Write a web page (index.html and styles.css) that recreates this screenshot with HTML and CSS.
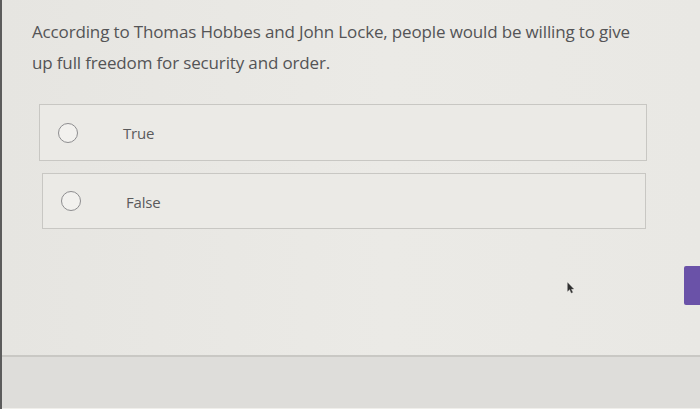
FILE: index.html
```html
<!DOCTYPE html>
<html lang="en">
<head>
<meta charset="utf-8">
<title>Question</title>
<link rel="stylesheet" href="styles.css">
</head>
<body>
<div class="page">
  <main class="content">
    <p class="question">According to Thomas Hobbes and John Locke, people would be willing to give up full freedom for security and order.</p>
    <div class="options">
      <label class="option">
        <span class="radio"></span>
        <span class="option-text">True</span>
      </label>
      <label class="option option-second">
        <span class="radio"></span>
        <span class="option-text">False</span>
      </label>
    </div>
    <div class="actions">
      <button class="next-btn" type="button" aria-label="Next"></button>
    </div>
  </main>
  <footer class="footer"></footer>
  <svg class="cursor" width="8" height="12" viewBox="0 0 12 18"><path d="M1 1 L1 14 L4 11 L6.5 16.5 L8.5 15.5 L6 10.5 L10 10.5 Z" fill="#2e2e2e" stroke="#555" stroke-width="0.6"/></svg>
</div>
</body>
</html>
```

FILE: styles.css
```css
html, body {
  margin: 0;
  padding: 0;
}
body {
  background: #e8e7e3;
  font-family: "Open Sans", "DejaVu Sans", sans-serif;
  color: #58585a;
  width: 700px;
  height: 409px;
  overflow: hidden;
}
.page {
  position: relative;
  height: 409px;
  display: flex;
  flex-direction: column;
  border-left: 2px solid #5c5c5c;
  background: linear-gradient(90deg, #e6e5e1 0%, #ebeae6 55%, #e9e8e4 100%);
}
.content {
  flex: 1;
  display: flex;
  flex-direction: column;
}
.question {
  margin: 0;
  padding: 16px 0 0 30px;
  width: 605px;
  font-size: 17px;
  letter-spacing: -0.15px;
  line-height: 31px;
  color: #545456;
}
.options {
  margin: 26px 0 0 37px;
  width: 608px;
  display: flex;
  flex-direction: column;
  gap: 12px;
}
.option {
  box-sizing: border-box;
  height: 57px;
  border: 1px solid #c8c7c3;
  background: #ebeae6;
  display: flex;
  align-items: center;
  padding-left: 18px;
}
.option-second {
  height: 56px;
  margin-left: 3px;
  width: 604px;
}
.radio {
  box-sizing: border-box;
  width: 20px;
  height: 20px;
  border: 1.6px solid #8d8d8f;
  border-radius: 50%;
  background: #f2f1ee;
  flex: none;
}
.option-text {
  margin-left: 45px;
  font-size: 15px;
  letter-spacing: -0.2px;
  color: #5a5a5c;
  padding-top: 1px;
}
.actions {
  margin-top: 37px;
  display: flex;
  justify-content: flex-end;
}
.next-btn {
  width: 16px;
  height: 39px;
  border: none;
  border-radius: 2px 0 0 2px;
  background: #6a52a8;
  padding: 0;
}
.footer {
  height: 51px;
  border-top: 2px solid #c9c8c4;
  background: #dedddA;
  border-bottom: 1px solid #f0efeb;
}
.cursor {
  position: absolute;
  left: 565px;
  top: 282px;
}
```
